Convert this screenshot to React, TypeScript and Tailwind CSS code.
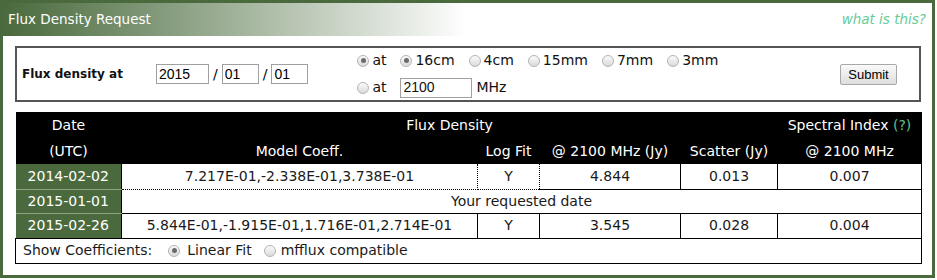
import React from 'react';

function Radio({ checked = false }: { checked?: boolean }) {
  return (
    <span className="inline-flex h-3 w-3 shrink-0 items-center justify-center rounded-full border border-[#b4b4b4] bg-linear-to-b from-[#fbfbfb] to-[#dadada]">
      {checked && <span className="h-[5px] w-[5px] rounded-full bg-[#6b6b6b]" />}
    </span>
  );
}

function Opt({ label, checked = false }: { label: string; checked?: boolean }) {
  return (
    <span className="mr-[14px] inline-flex items-center gap-[3px]">
      <Radio checked={checked} />
      <span>{label}</span>
    </span>
  );
}

const BANDS = ['16cm', '4cm', '15mm', '7mm', '3mm'];

export default function App() {
  return (
    <div className="h-[280px] w-[937px] bg-white">
      <div className="h-[278px] w-[935px] border-[3px] border-[#4a6a3d]">
        {/* title bar */}
        <div className="flex h-[33px] items-center justify-between bg-linear-to-r from-[#4a6a3d] to-white to-50% pr-[6px] pl-[5px] font-['DejaVu_Sans',sans-serif]">
          <span className="text-[13.5px] text-white">Flux Density Request</span>
          <span className="text-[13.5px] italic text-[#66cc99]">what is this?</span>
        </div>

        {/* request form */}
        <div className="mt-[10px] ml-3 flex h-[56px] w-[906px] items-center border-2 border-[#555] pl-[5px] pr-[22px]">
          <span className="w-[134px] font-['DejaVu_Sans',sans-serif] text-[12px] font-bold text-[#111]">
            Flux density at
          </span>
          <div className="flex items-center font-['Liberation_Sans',Arial,sans-serif] text-[14px] text-black">
            <input
              defaultValue="2015"
              className="h-[20px] w-[53px] border border-[#a0a0a0] px-[2px] outline-none"
            />
            <span className="mx-[4px] font-['DejaVu_Sans',sans-serif]">/</span>
            <input
              defaultValue="01"
              className="h-[20px] w-[37px] border border-[#a0a0a0] px-[2px] outline-none"
            />
            <span className="mx-[4px] font-['DejaVu_Sans',sans-serif]">/</span>
            <input
              defaultValue="01"
              className="h-[20px] w-[37px] border border-[#a0a0a0] px-[2px] outline-none"
            />
          </div>
          <div className="ml-[49px] flex flex-col gap-[6px] font-['DejaVu_Sans',sans-serif] text-[14px] text-[#111]">
            <div className="flex items-center">
              <span className="inline-flex w-[43px] items-center gap-[3px]">
                <Radio checked />
                <span>at</span>
              </span>
              {BANDS.map((b) => (
                <Opt key={b} label={b} checked={b === '16cm'} />
              ))}
            </div>
            <div className="flex items-center">
              <span className="inline-flex w-[43px] items-center gap-[3px]">
                <Radio />
                <span>at</span>
              </span>
              <input
                defaultValue="2100"
                className="h-[20px] w-[72px] border border-[#a0a0a0] px-[2px] font-['Liberation_Sans',Arial,sans-serif] outline-none"
              />
              <span className="ml-[4px]">MHz</span>
            </div>
          </div>
          <button className="ml-auto h-[21px] w-[57px] rounded-[2px] border border-[#a8a8a8] bg-linear-to-b from-[#fafafa] to-[#dedede] font-['Liberation_Sans',Arial,sans-serif] text-[13px] text-black">
            Submit
          </button>
        </div>

        {/* results */}
        <table className="mt-[10px] ml-3 w-[906px] table-fixed border-collapse font-['DejaVu_Sans',sans-serif] text-[14px] text-[#1a1a1a]">
          <colgroup>
            <col className="w-[106px]" />
            <col className="w-[356px]" />
            <col className="w-[62px]" />
            <col className="w-[141px]" />
            <col className="w-[97px]" />
            <col className="w-[144px]" />
          </colgroup>
          <thead className="bg-black text-white">
            <tr className="h-[26px]">
              <th className="font-normal">Date</th>
              <th colSpan={4} className="font-normal">Flux Density</th>
              <th className="font-normal">
                Spectral Index <span className="text-[#5fc48a]">(?)</span>
              </th>
            </tr>
            <tr className="h-[26px]">
              <th className="font-normal">(UTC)</th>
              <th className="font-normal">Model Coeff.</th>
              <th className="font-normal">Log Fit</th>
              <th className="font-normal">@ 2100 MHz (Jy)</th>
              <th className="font-normal">Scatter (Jy)</th>
              <th className="font-normal">@ 2100 MHz</th>
            </tr>
          </thead>
          <tbody className="text-center">
            <tr className="h-[25px]">
              <td className="border-r border-b border-r-black border-b-[#8fa386] bg-[#4a6a3d] text-white">2014-02-02</td>
              <td className="border-r border-b border-dotted border-black">7.217E-01,-2.338E-01,3.738E-01</td>
              <td className="border-r border-b border-dotted border-black">Y</td>
              <td className="border-r border-b border-black border-r-dotted border-b-solid">4.844</td>
              <td className="border-r border-b border-black border-r-dotted border-b-solid">0.013</td>
              <td className="border-r border-b border-black">0.007</td>
            </tr>
            <tr className="h-[24px]">
              <td className="border-r border-b border-r-black border-b-[#8fa386] bg-[#4a6a3d] text-white">2015-01-01</td>
              <td colSpan={5} className="border-r border-black">Your requested date</td>
            </tr>
            <tr className="h-[25px]">
              <td className="border-r border-b border-r-black border-b-black bg-[#4a6a3d] text-white">2015-02-26</td>
              <td className="border-t border-r border-b border-black border-t-dotted border-r-dotted">5.844E-01,-1.915E-01,1.716E-01,2.714E-01</td>
              <td className="border-t border-r border-b border-black border-r-dotted">Y</td>
              <td className="border-t border-r border-b border-black border-r-dotted">3.545</td>
              <td className="border-t border-r border-b border-black border-r-dotted">0.028</td>
              <td className="border-t border-r border-b border-black">0.004</td>
            </tr>
            <tr className="h-[25px]">
              <td colSpan={6} className="border-r border-b border-l border-black pl-[7px] text-left">
                <span className="inline-flex items-center">
                  Show Coefficients:
                  <span className="ml-[16px] inline-flex items-center gap-[7px]">
                    <Radio checked />
                    Linear Fit
                  </span>
                  <span className="ml-[12px] inline-flex items-center gap-[5px]">
                    <Radio />
                    mfflux compatible
                  </span>
                </span>
              </td>
            </tr>
          </tbody>
        </table>
      </div>
    </div>
  );
}
